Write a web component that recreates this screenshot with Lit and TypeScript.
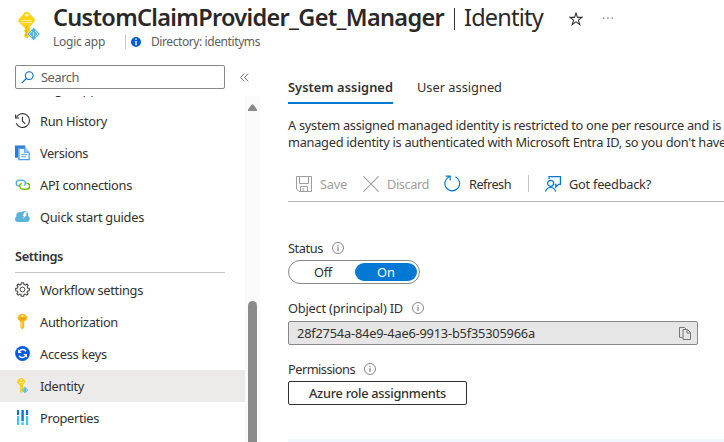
import { LitElement, html, css, svg, nothing } from "lit";
import { customElement, property } from "lit/decorators.js";

/** A single line of text whose tracking is adjusted so that it takes a given width. */
@customElement("fit-text")
export class FitText extends LitElement {
  @property({ type: Number }) width = 0;

  static styles = css`
    :host { display: inline-block; flex: none; white-space: pre; }
    .line { display: inline-block; white-space: pre; }
  `;

  render() {
    return html`<span class="line"><slot></slot></span>`;
  }

  firstUpdated() {
    const line = this.renderRoot.querySelector<HTMLElement>(".line")!;
    const count = (this.textContent ?? "").length;
    if (!this.width || !count) return;
    const natural = line.getBoundingClientRect().width;
    line.style.letterSpacing = `${(this.width - natural) / count}px`;
    this.style.width = `${this.width}px`;
  }
}

const key = svg`
  <path fill="#fcd116" d="M5.2 1.2 9.2 1.2 12.6 5 10 8.6 9.2 9.8V17.6L7.5 19.6 5.3 17.7V16.5L6.3 15.6 5.3 14.6V13.6L6.3 12.7 5.2 11.8V9.8L1.6 6.2 3 3Z"/>
`;

const icons = {
  history: svg`<g fill="none" stroke="#323130" stroke-width="1.1"><path d="M1.3 4.6A6.9 6.9 0 1 1 1.2 10.2"/><path d="M.6 1.6V5H4.2M7.4 3.8V8L10.2 10.8"/></g>`,
  versions: svg`<path fill="#2b7cd3" d="M0 .4H10.2V3H3V12.8H0Z"/><path fill="#4f9ae8" d="M3.2 2.6H10L14.8 7.4V15.2H3.2Z"/><path fill="#eef6ff" d="M4.6 4H9.2V8H13.6V14H4.6Z"/><path fill="#8fc4f5" d="M10 2.6 14.8 7.4H10Z"/><path stroke="#6aaaf0" d="M6.2 9.5H12.2M6.2 11.7H11"/>`,
  link: svg`<g fill="none" stroke-width="1.5" stroke-linecap="round"><path stroke="#59b4d9" d="M3.4 9A3 3 0 0 1 3.6 3.2H7.4A2.9 2.9 0 0 1 9.6 8"/><path stroke="#7fba00" d="M6.2 6.6A3 3 0 0 0 7.6 12.2H11.4A3 3 0 0 0 11.8 6.2"/></g>`,
  cloud: svg`<path fill="#59b4d9" d="M2.8 13A2.9 2.9 0 0 1 0 10.2 2.9 2.9 0 0 1 1.4 7.6V5L3 3.2H6L7.6 2.2H11.6L13 4.4V7A3.2 3.2 0 0 1 12.2 13Z"/><path fill="#fff" d="M9.4 3.2H12L10.8 5.8H12L8 10 9 7H7.6Z"/>`,
  gear: svg`<g fill="none" stroke="#484644"><circle cx="7.5" cy="7.5" r="2.4"/><path stroke-linejoin="round" stroke-width="1.1" d="M6.3.8H8.7L9 2.6 10.3 3.1 11.9 2 13.2 3.3 12.2 4.8 12.7 6.1 14.3 6.3V8.7L12.6 9 12.1 10.3 13.1 11.8 11.8 13.1 10.2 12.1 9 12.6 8.7 14.3H6.3L6 12.6 4.8 12.1 3.3 13.1 1.9 11.8 2.9 10.3 2.4 9 .7 8.7V6.3L2.5 6.1 3 4.8 1.9 3.3 3.2 2 4.7 3 6 2.6Z"/></g>`,
  authKey: svg`<path fill="#fdb813" d="M5.2.1H9.4L12.2 2.8V5L9.2 7.7V13.8L7.4 15.3 5.4 13.8V7.7L2.6 5V2.8Z"/><path fill="#ffd866" d="M6.2 8H7.4V13.6H6.2Z"/><rect x="4.8" y="4.4" width="5.3" height="1" fill="#e08a00"/><circle cx="7.4" cy="2.1" r="1" fill="#fff"/>`,
  sync: svg`<circle cx="7.5" cy="7.5" r="7.4" fill="#015cda"/><g fill="none" stroke="#fff" stroke-width="1.5"><path d="M4 6A4 4 0 0 1 11 5.4M11 9A4 4 0 0 1 4 9.8"/></g><path fill="#fff" d="M3 3.2V6.9H6.7ZM12 11.8V8.1H8.3Z"/>`,
  identity: svg`<g transform="translate(.5 -.6) scale(.8)">${key}<path stroke="#fff3b0" d="M4.4 6.4H10"/><circle cx="7.2" cy="3.2" r=".9" fill="#fff"/></g><path fill="#59b4d9" d="M10 8.8 13.2 12 10 15.2 6.8 12Z"/><path fill="none" stroke="#e6f5fb" stroke-width=".5" d="M9.4 10.6 8.2 12 9.4 13.3M10.7 10.6 11.9 12 10.7 13.3"/>`,
  bars: svg`<path fill="#32cdeb" d="M2 5.9H4.1V15H2ZM6.4 12.2H8.8V15H6.4ZM11 5.9H13.1V15H11Z"/><path fill="#0078d4" d="M2 0H4.1V5H2ZM6.4 0H8.8V11.2H6.4ZM11 0H13.1V5H11Z"/>`,
};

type IconName = keyof typeof icons;
interface NavEntry { label: string; width: number; icon?: IconName; selected?: boolean }

const general: NavEntry[] = [
  { label: "Logic app code view", width: 121 },
  { label: "Run History", width: 67, icon: "history" },
  { label: "Versions", width: 48, icon: "versions" },
  { label: "API connections", width: 92, icon: "link" },
  { label: "Quick start guides", width: 104, icon: "cloud" },
];

const settings: NavEntry[] = [
  { label: "Workflow settings", width: 103, icon: "gear" },
  { label: "Authorization", width: 78, icon: "authKey" },
  { label: "Access keys", width: 67, icon: "sync" },
  { label: "Identity", width: 44, icon: "identity", selected: true },
  { label: "Properties", width: 59, icon: "bars" },
];

const infoIcon = html`<svg class="info" width="12" height="12" viewBox="0 0 12 12"><circle cx="6" cy="6" r="5.5" fill="none" stroke="#797775" stroke-width=".9"/><path stroke="#797775" stroke-width="1.1" d="M6 5V9M6 3V4.2"/></svg>`;

@customElement("app-root")
export class AppRoot extends LitElement {
  static styles = css`
    :host {
      display: flex; flex-direction: column; width: 724px; height: 442px; overflow: hidden;
      background: #fff; color: #323130; font: 12.8px/16px "Noto Sans", "Open Sans", sans-serif;
    }
    svg { display: block; flex: none; }

    .header { display: flex; height: 60px; flex: none; }
    .logo { margin: 11px 10px 0 18px; }
    .heading { display: flex; align-items: center; height: 34px; font-size: 23.5px; line-height: 34px; color: #292827; }
    .name { font-weight: 600; }
    .pipe { width: 1px; height: 22px; margin: 4px 9px 0 10px; background: #323130; flex: none; }
    .page { font-weight: 400; }
    .star { margin: 3px 0 0 26px; }
    .dots { margin: 1px 0 0 19px; }
    .sub { display: flex; align-items: center; height: 15px; font-size: 12px; color: #605e5c; }
    .divider { width: 1px; height: 14px; margin: 0 5px 0 20px; background: #c8c6c4; }
    .sub .badge { margin-right: 10px; }

    .body { display: flex; flex: 1; min-height: 0; }
    .side { width: 260px; display: flex; flex-direction: column; flex: none; }
    .finder { display: flex; align-items: center; height: 36px; padding: 5px 0 7px 15px; box-sizing: border-box; }
    .box { display: flex; align-items: center; gap: 7px; box-sizing: border-box; width: 210px; height: 24px; padding-left: 5px; border: 1px solid #8a8886; border-radius: 2px; color: #605e5c; }
    .collapse { margin-left: 15px; }
    .scroller { display: flex; flex: 1; min-height: 0; overflow: hidden; }
    .list { width: 245px; margin-top: -23px; }
    .entry { display: flex; align-items: center; gap: 10px; height: 32px; padding-left: 15px; }
    .entry.selected { background: #edebe9; }
    .slot { width: 15px; height: 16px; flex: none; }
    .group { display: flex; align-items: flex-end; box-sizing: border-box; width: 210px; height: 40px; margin: 0 0 1px 15px; padding-bottom: 8px; border-bottom: 1px solid #c8c6c4; font-weight: 600; }
    .track { width: 15px; background: #fafafa; display: flex; flex-direction: column; align-items: center; }
    .up { margin: 8px 0 190px; }
    .thumb { width: 9px; flex: 1; background: #8b8b8b; border-radius: 5px 5px 0 0; }

    .main { flex: 1; padding-left: 28px; min-width: 0; overflow: hidden; display: flex; flex-direction: column; }
    .tabs { display: flex; gap: 24px; height: 44px; flex: none; }
    .tab { padding-top: 19px; height: 23px; border-bottom: 2px solid transparent; }
    .tab.active { font-weight: 600; border-color: #0078d4; }
    .intro { display: flex; flex-direction: column; margin-top: 13px; line-height: 17px; }
    .tools { display: flex; align-items: center; height: 35px; margin-top: 15px; border-bottom: 1px solid #bab8b7; flex: none; width: 460px; }
    .tool { display: flex; align-items: center; gap: 8px; }
    .tool.off { color: #a19f9d; }
    .save { margin-left: 8px; }
    .discard { margin-left: 16px; }
    .refresh { margin-left: 15px; }
    .rule { width: 1px; height: 17px; margin: 0 16px 0 17px; background: #c8c6c4; }
    .label { display: flex; align-items: center; gap: 9px; height: 16px; flex: none; }
    .status { margin-top: 38px; }
    .toggle { display: flex; box-sizing: border-box; width: 132px; height: 24px; margin-top: 4px; padding: 2px; border: 1px solid #8a8886; border-radius: 12px; flex: none; }
    .choice { display: flex; align-items: center; justify-content: center; flex: 1; border-radius: 9px; }
    .choice.on { flex: none; width: 62px; background: #0078d4; color: #fff; }
    .object { margin-top: 16px; }
    .field { display: flex; align-items: center; justify-content: space-between; box-sizing: border-box; width: 410px; height: 24px; margin-top: 5px; padding: 0 6px 0 8px; border: 1px solid #8a8886; border-radius: 2px; background: #e6e6e6; flex: none; }
    .perms { margin-top: 16px; }
    .button { display: flex; align-items: center; justify-content: center; box-sizing: border-box; width: 179px; height: 24px; margin-top: 4px; border: 1px solid #323130; border-radius: 2px; font-weight: 500; flex: none; }
    .band { margin-top: 34px; height: 20px; background: #f0f6ff; }
  `;

  private entry(e: NavEntry) {
    return html`<div class="entry ${e.selected ? "selected" : ""}">
      <span class="slot">${e.icon ? html`<svg width="15" height="16" viewBox="0 0 15 16">${icons[e.icon]}</svg>` : nothing}</span>
      <fit-text width=${e.width}>${e.label}</fit-text>
    </div>`;
  }

  render() {
    return html`
      <div class="header">
        <svg class="logo" width="25" height="31" viewBox="0 0 25 31">
          <path fill="#fcd116" d="M7.2 1H10.2L16.8 8Q17.4 9.5 16 11L12 15.4V24L9.3 27.5 6.2 25.3V23.4L7.6 22 6.2 20.6V19.3L7.6 18 5.2 15.5 .6 10.7Q0 9.5 .9 8Z"/>
          <circle cx="8.7" cy="4.2" r="1.4" fill="#fff"/>
          <path stroke="#fff0a0" stroke-width="1" d="M3.3 9.5H14M3.3 11.5H14"/>
          <path stroke="#edae00" d="M8.2 15V25"/>
          <path fill="#59b4d9" stroke="#fff" stroke-width=".5" d="M15.6 16.5 22.2 23 15.6 29.6 9 23Z"/>
          <path fill="none" stroke="#e6f5fb" stroke-width=".8" d="M14 20 11.2 23 14 26M17.2 20 20 23 17.2 26M15.6 21.2V25"/>
        </svg>
        <div>
          <div class="heading">
            <fit-text class="name" width="391">CustomClaimProvider_Get_Manager</fit-text>
            <span class="pipe"></span>
            <fit-text class="page" width="79">Identity</fit-text>
            <svg class="star" width="14" height="14" viewBox="0 0 14 14"><path fill="none" stroke="#323130" stroke-width="1.1" d="M7 1.2 8.5 5.4H13L9.4 8.1 10.8 12.6 7 9.9 3.2 12.6 4.6 8.1 1 5.4H5.5Z"/></svg>
            <svg class="dots" width="12" height="4" viewBox="0 0 12 4"><path fill="#605e5c" d="M1 1.5H2.3V2.8H1ZM5.3 1.5H6.6V2.8H5.3ZM9.6 1.5H10.9V2.8H9.6Z"/></svg>
          </div>
          <div class="sub">
            <fit-text width="52">Logic app</fit-text>
            <span class="divider"></span>
            <svg class="badge" width="10" height="10" viewBox="0 0 10 10"><circle cx="5" cy="5" r="5" fill="#015cda"/><path fill="#fff" d="M4.3 1.6H5.7V3H4.3ZM4.3 4H5.7V8.2H4.3Z"/></svg>
            <fit-text width="109">Directory: identityms</fit-text>
          </div>
        </div>
      </div>
      <div class="body">
        <div class="side">
          <div class="finder">
            <div class="box">
              <svg width="13" height="13" viewBox="0 0 13 13"><g fill="none" stroke="#0f6cbd" stroke-width="1.1"><circle cx="8.2" cy="4.6" r="3.9"/><path d="M5.4 7.5.6 12.2"/></g></svg>
              <fit-text width="38">Search</fit-text>
            </div>
            <svg class="collapse" width="9" height="9" viewBox="0 0 9 9"><path fill="none" stroke="#605e5c" stroke-width=".9" d="M4.2.6.6 4.5 4.2 8.4M8.2.6 4.6 4.5 8.2 8.4"/></svg>
          </div>
          <div class="scroller">
            <div class="list">
              ${general.map((e) => this.entry(e))}
              <div class="group"><fit-text width="48">Settings</fit-text></div>
              ${settings.map((e) => this.entry(e))}
            </div>
            <div class="track">
              <svg class="up" width="9" height="7" viewBox="0 0 9 7"><path fill="#8b8b8b" d="M3.6.4H5.4L9 5.6V7H0V5.6Z"/></svg>
              <span class="thumb"></span>
            </div>
          </div>
        </div>
        <div class="main">
          <div class="tabs">
            <div class="tab active"><fit-text width="105">System assigned</fit-text></div>
            <div class="tab"><fit-text width="85">User assigned</fit-text></div>
          </div>
          <div class="intro">
            <fit-text width="433">A system assigned managed identity is restricted to one per resource and is</fit-text>
            <fit-text width="438">managed identity is authenticated with Microsoft Entra ID, so you don't have</fit-text>
          </div>
          <div class="tools">
            <div class="tool off save">
              <svg width="16" height="16" viewBox="0 0 16 16"><path fill="none" stroke="#a19f9d" d="M.5.5H15.5V15.5H3L.5 13ZM3.5.5V7.5H12.5V.5M4.5 15.5V10.5H11.5V15.5M7 12V15"/></svg>
              <fit-text width="27">Save</fit-text>
            </div>
            <div class="tool off discard">
              <svg width="16" height="16" viewBox="0 0 16 16"><path stroke="#a19f9d" stroke-width="1.1" d="M.4.4 15.6 15.6M15.6.4.4 15.6"/></svg>
              <fit-text width="42">Discard</fit-text>
            </div>
            <div class="tool refresh">
              <svg width="17" height="17" viewBox="0 0 17 17"><path fill="none" stroke="#0078d4" stroke-width="1.2" d="M11.5 1.8A7.4 7.4 0 1 1 5.2 1.7M1.6 1.1H6.2V5.4"/></svg>
              <fit-text width="42">Refresh</fit-text>
            </div>
            <span class="rule"></span>
            <div class="tool">
              <svg width="16" height="16" viewBox="0 0 16 16"><g fill="none" stroke="#0078d4" stroke-width="1.2"><path d="M4 3V.6H15.4V8.4H13.6L10.8 11V8.4H9.6"/><circle cx="5.6" cy="7.3" r="3"/><path d="M.6 15.6A5.1 5.1 0 0 1 10.6 15.6"/></g></svg>
              <fit-text width="82">Got feedback?</fit-text>
            </div>
          </div>
          <div class="label status"><fit-text width="35">Status</fit-text>${infoIcon}</div>
          <div class="toggle">
            <span class="choice"><fit-text width="18">Off</fit-text></span>
            <span class="choice on"><fit-text width="18">On</fit-text></span>
          </div>
          <div class="label object"><fit-text width="115">Object (principal) ID</fit-text>${infoIcon}</div>
          <div class="field">
            <fit-text width="238">28f2754a-84e9-4ae6-9913-b5f35305966a</fit-text>
            <svg width="12" height="13" viewBox="0 0 12 13"><path fill="none" stroke="#797775" d="M3.5 10.5H.5V.5H5.5L7 2M4 2.5H8.5L11.5 5.5V12.5H4ZM8 2.5V6H11.5"/></svg>
          </div>
          <div class="label perms"><fit-text width="67">Permissions</fit-text>${infoIcon}</div>
          <div class="button"><fit-text width="137">Azure role assignments</fit-text></div>
          <div class="band"></div>
        </div>
      </div>
    `;
  }
}
